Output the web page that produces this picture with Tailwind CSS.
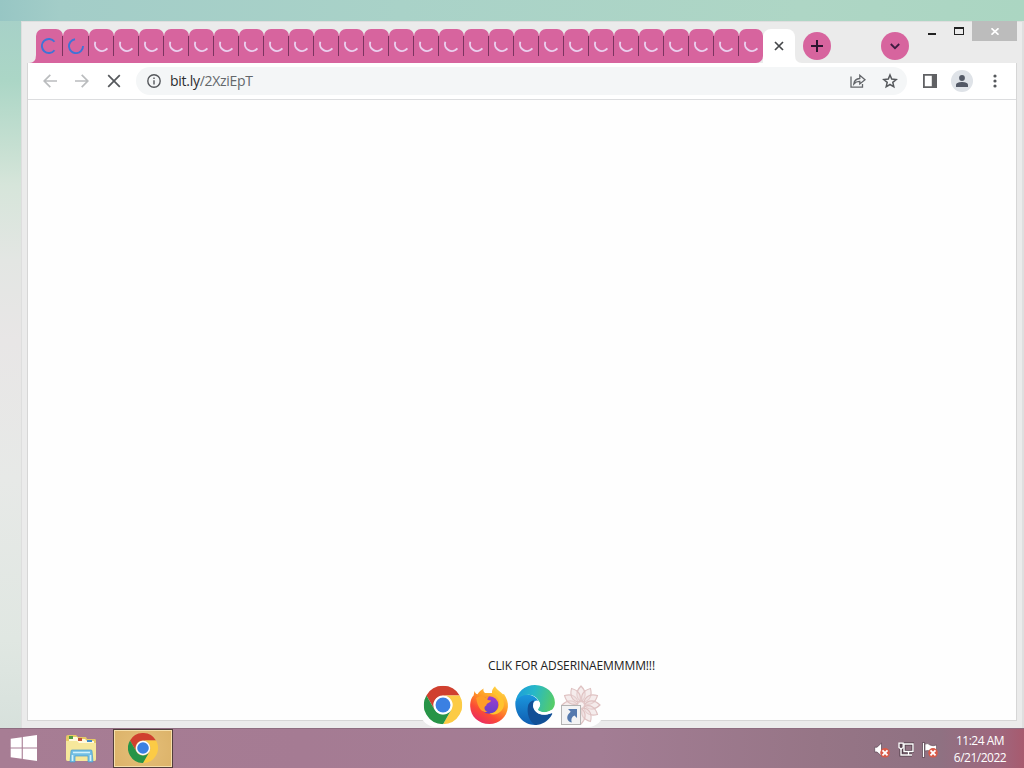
<!DOCTYPE html>
<html lang="en">
<head>
  <meta charset="UTF-8" />
  <meta name="viewport" content="width=device-width, initial-scale=1.0" />
  <title>Desktop</title>
  <script src="https://cdn.jsdelivr.net/npm/@tailwindcss/browser@4"></script>
</head>
<body class="font-['Open_Sans','Noto_Sans',sans-serif]">

<!-- shared logo -->
<svg class="hidden">
  <symbol id="chrome" viewBox="0 0 48 48">
    <path fill="#d0402f" d="M3.2 12A24 24 0 0 1 44.8 12H24A12 12 0 0 0 13.6 30Z"/>
    <path fill="#fccb45" d="M3.2 12A24 24 0 0 1 44.8 12H24A12 12 0 0 0 13.6 30Z" transform="rotate(120 24 24)"/>
    <path fill="#279447" d="M3.2 12A24 24 0 0 1 44.8 12H24A12 12 0 0 0 13.6 30Z" transform="rotate(240 24 24)"/>
    <circle cx="24" cy="24" r="11.5" fill="#fff"/>
    <circle cx="24" cy="24" r="9.3" fill="#3b80e2"/>
  </symbol>
</svg>

<div class="relative w-[1024px] h-[768px] overflow-hidden flex flex-col bg-[linear-gradient(180deg,#a5cfc8_0px,#abd6c6_80px,#c5dfd1_145px,#d6e5da_185px,#e3e6e3_260px,#e8e6e6_340px,#e7e9e7_480px,#e0e7e2_640px,#d7e1dc_728px)]">
  <div class="absolute top-0 left-0 w-full h-[21px] bg-[linear-gradient(90deg,#97c6c4_0px,#a3cdc8_60px,#a9d2c8_400px,#aed6c5_800px,#abd6c2_1024px)]"></div>

  <!-- browser window -->
  <div class="absolute left-[21px] top-[21px] w-[1003px] h-[707px] bg-[#ebebeb] border-l border-t border-[#dedede] flex flex-col pl-[5px] pr-[8px] pb-[7px]">
    <!-- tab strip -->
    <div class="h-[41px] shrink-0 flex items-end pl-[9px] relative">
      <div class="relative flex h-[34px] bg-[#ebebeb]">
        <svg class="absolute -left-[7px] bottom-0 w-[8px] h-[8px]" viewBox="0 0 8 8"><path d="M8 0V8H0Q7 8 7 0Z" fill="#d7649e"/></svg>
        <div id="tabs" class="flex h-full"></div>
      </div>
      <!-- active tab -->
      <div class="relative w-[32px] h-[34px] bg-white rounded-t-[8px] flex items-center justify-center">
        <svg class="w-[10px] h-[10px]" viewBox="0 0 10 10" stroke="#45474a" stroke-width="1.7"><path d="M1 1L9 9M9 1L1 9"/></svg>
        <svg class="absolute -right-[7px] bottom-0 w-[7px] h-[8px]" viewBox="0 0 7 8"><path d="M0 0V8H7Q0 8 0 0Z" fill="#fff"/></svg>
      </div>
      <div class="w-[28px] h-[28px] ml-[8px] mb-[3px] rounded-full bg-[#d7649e] flex items-center justify-center">
        <svg class="w-[14px] h-[14px]" viewBox="0 0 14 14" stroke="#2c1530" stroke-width="2"><path d="M7 1V13M1 7H13"/></svg>
      </div>
      <div class="w-[28px] h-[28px] ml-[50px] mb-[3px] rounded-full bg-[#d7649e] flex items-center justify-center">
        <svg class="w-[10px] h-[7px]" viewBox="0 0 10 7" fill="none" stroke="#3d1c40" stroke-width="1.8"><path d="M.8 1L5 5.2L9.2 1"/></svg>
      </div>
      <!-- window controls -->
      <div class="absolute right-[-8px] top-[-1px] h-[21px] flex w-[104px]">
        <div class="w-[25px] pt-[12px] pl-[8px]"><div class="w-[8px] h-[2px] bg-[#222]"></div></div>
        <div class="w-[27px] pt-[6px] pl-[9px]"><div class="w-[10px] h-[8px] border border-t-2 border-[#222]"></div></div>
        <div class="w-[45px] h-[20px] bg-[#bcbcbc] flex items-center justify-center">
          <svg class="w-[8px] h-[7px]" viewBox="0 0 8 7" stroke="#fff" stroke-width="1.7"><path d="M.5 .3L7.5 6.7M7.5 .3L.5 6.7"/></svg>
        </div>
      </div>
    </div>

    <div class="flex-1 flex flex-col bg-white border-x border-b border-[#d6d6d6] -mr-px">
      <!-- toolbar -->
      <div class="h-[37px] border-b border-[#dcdddf] flex items-center">
        <svg class="w-[14px] h-[14px] ml-[15px]" viewBox="0 0 14 14" fill="none" stroke="#babcbe" stroke-width="1.7"><path d="M14 7H1.5M7.3 .8L1.2 7L7.3 13.2"/></svg>
        <svg class="w-[14px] h-[14px] ml-[18px]" viewBox="0 0 14 14" fill="none" stroke="#babcbe" stroke-width="1.7"><path d="M0 7H12.5M6.7 .8L12.8 7L6.7 13.2"/></svg>
        <svg class="w-[14px] h-[14px] ml-[18px]" viewBox="0 0 14 14" fill="none" stroke="#55585c" stroke-width="1.7"><path d="M1.2 1.2L12.8 12.8M12.8 1.2L1.2 12.8"/></svg>
        <div class="w-[771px] h-[28px] ml-[15px] rounded-full bg-[#f4f6f7] flex items-center pl-[11px] pr-[9px]">
          <svg class="w-[14px] h-[14px]" viewBox="0 0 14 14" fill="none" stroke="#55585c" stroke-width="1.4"><circle cx="7" cy="7" r="6.2"/><path d="M7 6.2V10.4M7 3.4V5"/></svg>
          <div class="ml-[9px] text-[14px] leading-[20px] tracking-[-0.28px] text-[#63676b] whitespace-nowrap"><span class="text-[#2a2d30]">bit.ly</span>/2XziEpT</div>
          <svg class="w-[16px] h-[14px] ml-auto" viewBox="0 0 16 14" fill="none" stroke="#63666a" stroke-width="1.3"><path d="M1 2.5V13.2H12.5V10M3.8 10C4.2 6.5 6.5 4.7 9.8 4.5V1.3L15 5.8L9.8 10V7.3C7.3 7.2 5.3 8.2 3.8 10Z"/></svg>
          <svg class="w-[16px] h-[16px] ml-[16px]" viewBox="0 0 16 16" fill="none" stroke="#55585c" stroke-width="1.5"><path d="M8 2L9.7 6.1L14.2 6.5L10.8 9.4L11.8 13.8L8 11.5L4.2 13.8L5.2 9.4L1.8 6.5L6.3 6.1Z"/></svg>
        </div>
        <svg class="w-[14px] h-[14px] ml-[16px]" viewBox="0 0 14 14"><path fill="#606164" fill-rule="evenodd" d="M0 0H14V14H0ZM1.8 1.8V12.2H8.8V1.8Z"/></svg>
        <div class="w-[22px] h-[22px] ml-[14px] rounded-full bg-[#dfe3e8] flex items-center justify-center">
          <svg class="w-[12px] h-[12px]" viewBox="0 0 12 12" fill="#535966"><circle cx="6" cy="3" r="2.9"/><path d="M0 12V10C0 7.8 3.5 7 6 7S12 7.8 12 10V12Z"/></svg>
        </div>
        <svg class="w-[4px] h-[14px] ml-[20px]" viewBox="0 0 4 14" fill="#55585c"><circle cx="2" cy="2" r="1.6"/><circle cx="2" cy="7" r="1.6"/><circle cx="2" cy="12" r="1.6"/></svg>
      </div>
      <!-- blank page -->
      <div class="flex-1 bg-[#fefefe]"></div>
    </div>
  </div>
  <div class="absolute left-[1022px] top-[21px] w-[2px] h-[707px] bg-[#dfdfdf]"></div>

  <!-- dock -->
  <div class="absolute left-[488px] top-[658px] text-[12px] leading-[16px] tracking-[-0.12px] text-[#222] whitespace-nowrap">CLIK FOR ADSERINAEMMMM!!!</div>
  <div class="absolute left-[420px] top-[682px] h-[45px] w-[184px] flex items-center gap-[6px] px-[3px] bg-[#fefefe] rounded-[16px]">
    <svg class="w-[40px] h-[40px]" viewBox="-1 -1 50 50"><use href="#chrome" width="48" height="48"/></svg>
    <!-- firefox -->
    <svg class="w-[40px] h-[40px]" viewBox="0 0 40 40">
      <defs>
        <linearGradient id="ff" x1=".85" y1="0" x2=".25" y2="1"><stop offset="0" stop-color="#ffe14a"/><stop offset=".42" stop-color="#ff9a26"/><stop offset=".72" stop-color="#fb4b35"/><stop offset="1" stop-color="#e82867"/></linearGradient>
        <linearGradient id="ffp" x1="0" y1="0" x2="0" y2="1"><stop offset="0" stop-color="#a03bcf"/><stop offset="1" stop-color="#6542c7"/></linearGradient>
      </defs>
      <path fill="url(#ff)" d="M5.5 6C6.2 8 7 9 8.5 9.2C10 7 12 5 14.6 3.6C14 5.5 14.5 7 16 8L23 8C22.5 5.5 24 3 26 1.2C27 4 29.5 5 32 7.5C33.6 9.2 34.6 10 34.8 8.8C38 13.5 39.2 18 38.9 22C38 32 30.3 39 20.4 39C9.7 39 1.5 31.5 1.2 21.5C1 16 2.8 12 4.6 10.5Z"/>
      <circle cx="20.5" cy="20" r="8.8" fill="url(#ffp)"/>
      <path fill="#ff9d28" d="M7.2 13.2C10 10.8 14 10.8 16 12.7C17.5 11.2 19 11 20.3 11.2C18.4 12.7 18.2 14.3 18.7 15.1L22 15.6C22 17.5 17.5 18 17.3 20.4C14.5 21.5 15 25 18.5 27C13 27.5 9 24 7.2 13.2Z"/>
      <path fill="#ffc32d" d="M23 8C28 10.5 30.5 14 30.2 19C29.8 25 25.5 28.2 20.3 28.4C26 31.5 35 27 35 19C35 13 30.5 8.8 25 6Z"/>
    </svg>
    <!-- edge -->
    <svg class="w-[40px] h-[40px]" viewBox="0 0 40 40">
      <defs>
        <linearGradient id="eg" x1="0" y1=".3" x2="1" y2=".5"><stop offset="0" stop-color="#1c9bdc"/><stop offset=".45" stop-color="#27b8c8"/><stop offset="1" stop-color="#55cc68"/></linearGradient>
        <linearGradient id="eb" x1="0" y1="0" x2="0" y2="1"><stop offset="0" stop-color="#1b97de"/><stop offset="1" stop-color="#0f5cb0"/></linearGradient>
      </defs>
      <path fill="url(#eb)" d="M.3 18C1 12 8 8.5 14 9.8C20 11 23.5 15 23.5 17L16 21L22 39.9C9 41 .3 31 .3 18Z"/>
      <path fill="#114f96" d="M13 21C14 17 17 15.5 19 15.5C15 25 24 33 35.6 28.5C37 28 37.6 28.7 37 29.6C33 36.5 27 40 20.5 39.9C14 37 11.5 28 13 21Z"/>
      <path fill="url(#eg)" d="M.3 18C1.5 7 10 .1 20 .1C31.5 .1 39.9 8.5 39.9 17.5C39.9 23.5 35.5 27.3 30 27.3C26 27.3 22.5 26 22.7 24.5C22.9 23.5 24.7 22.8 24.7 19.8C24.7 14.5 19.5 9.8 13.4 9.8C7 9.8 2 13 .3 18Z"/>
      <path fill="#fff" d="M18.2 18.5C19 16 21.5 14.8 24 16.2C25.8 18 25.5 21.5 23.5 23.6C22.7 24.7 23 25.4 24.3 26.1C28.5 28.2 33.3 27.4 36.5 24.8L39 27L36 28.3C27 32 17 27.5 18.2 18.5Z"/>
    </svg>
    <!-- shortcut -->
    <div class="relative w-[40px] h-[40px]">
      <svg class="w-[40px] h-[40px]" viewBox="-20 -20 40 40" fill="#ecd9d9" fill-opacity=".5" stroke="#dfc2c2" stroke-width="1.1">
        <g id="petals"></g>
        <circle r="4" fill="#f2e4e4"/>
      </svg>
      <div class="absolute left-0 bottom-0 w-[20px] h-[20px] border border-[#b4b4b4] bg-[#f3f3f4] p-[2px]">
        <svg class="w-[14px] h-[15px]" viewBox="0 0 14 15"><path fill="#5479ae" d="M4 1H13V10L10.4 7.4C7.5 9 6.8 11.5 7.8 14.5C2.5 13.4 1.4 8 6.7 3.7Z"/></svg>
      </div>
    </div>
  </div>

  <!-- taskbar -->
  <div class="absolute left-0 bottom-0 w-full h-[40px] border-t border-[#8e6d80] flex items-center text-white bg-[linear-gradient(90deg,#a77d94_0px,#a57b93_300px,#a37d94_600px,#967586_820px,#8f7182_940px,#a0667d_1000px,#a75a6e_1024px)]">
    <svg class="w-[28px] h-[26px] ml-[10px] mb-[2px]" viewBox="0 0 28 26" fill="#fff"><path d="M.7 3.8L11.7 2.3V12.4H.7ZM12.8 2.1L27 0V12.4H12.8ZM.7 13.5H11.7V23.7L.7 22.2ZM12.8 13.5H27V26L12.8 23.9Z"/></svg>
    <!-- explorer -->
    <svg class="w-[32px] h-[30px] ml-[27px]" viewBox="0 0 32 30">
      <path fill="#e5c965" d="M1 3Q1 1 3 1H11L13 3H21L22 5H30Q31 5 31 7V25Q31 27 29 27H3Q1 27 1 25Z"/>
      <path fill="#fff9dd" d="M4 3H12L14 5H20L22 7H29V10H4Z"/>
      <path fill="#4f9b43" d="M4 2H8V5H4Z"/><path fill="#c45336" d="M13 4H17V7H13Z"/><path fill="#3f8ac5" d="M22 6H27V8H22Z"/>
      <path fill="#f6e79b" d="M1 7H12L14 9H31V25Q31 27 29 27H3Q1 27 1 25Z"/>
      <path fill="#73bfe4" stroke="#4a9bca" stroke-width=".7" d="M6 17Q6 16 7 16H26Q27 16 27 17L28 28H23V22H10V28H5Z"/>
      <path stroke="#d3f1fb" stroke-width="1.6" d="M8 18.5H25M7.5 21V27M25.5 21V27"/>
    </svg>
    <div class="ml-[16px] w-[60px] h-[39px] border border-[#513d3c] p-px bg-[#f6dfaa]">
      <div class="w-full h-full flex items-center justify-center bg-[radial-gradient(circle,#e5bf79,#dcb36a)]">
        <svg class="w-[30px] h-[30px] mb-px"><use href="#chrome"/></svg>
      </div>
    </div>
    <!-- tray -->
    <div class="ml-auto flex items-center pt-[2px]">
      <svg class="w-[16px] h-[16px]" viewBox="0 0 16 16"><path fill="#fff" stroke="#594451" stroke-width=".7" d="M.7 5.2H3L7.5 1V14L3 10H.7Z"/><circle cx="11" cy="10.8" r="4.8" fill="#d95a48"/><path stroke="#fff" stroke-width="1.8" d="M8.5 8.3L13.5 13.3M13.5 8.3L8.5 13.3"/></svg>
      <svg class="w-[16px] h-[16px] ml-[8px]" viewBox="0 0 16 16" fill="none"><path stroke="#4e3a47" stroke-width="3" d="M6 2H15V9.5H6ZM10.5 9.5V13M7 13H14M3 6V13H7"/><path stroke="#fff" stroke-width="1.4" d="M6 2H15V9.5H6ZM10.5 9.5V13M7 13H14M3 6V13H7"/><path fill="#594451" stroke="#fff" stroke-width="1.3" d="M1 1.2H5.2V5.5L3 7L1 5.5Z"/></svg>
      <svg class="w-[16px] h-[16px] ml-[8px]" viewBox="0 0 16 16"><path stroke="#4e3a47" stroke-width="2.8" d="M1.5 .5V15.5"/><path stroke="#fff" stroke-width="1.4" d="M1.5 1V15"/><path fill="#fff" stroke="#594451" stroke-width=".6" d="M3 2Q6 .8 8 3Q11 4.5 14.5 3V9.5Q11 11 8 9Q6 8 3 9Z"/><circle cx="11" cy="10.8" r="4.8" fill="#d95a48"/><path stroke="#fff" stroke-width="1.8" d="M8.5 8.3L13.5 13.3M13.5 8.3L8.5 13.3"/></svg>
    </div>
    <div class="w-[54px] ml-[15px] mr-[17px] flex flex-col items-center text-[12px] leading-[17px] tracking-[-0.5px] whitespace-nowrap">
      <span>11:24 AM</span>
      <span>6/21/2022</span>
    </div>
  </div>
</div>

<script>
  // loading tabs: the first two are already receiving data
  const tabs = document.getElementById("tabs");
  for (let i = 0; i < 29; i++) {
    const width = i === 0 ? "w-[27px]" : i === 1 ? "w-[26px]" : i === 28 ? "w-[24px]" : "w-[25px]";
    const corners = i === 28 ? "rounded-t-[7px] rounded-br-[7px]" : "rounded-t-[7px]";
    const line = i < 28 ? `<div class="absolute right-0 top-[7px] w-px h-[20px] bg-[#7b3560]"></div>` : "";
    const arc = i === 0
      ? `<path stroke="#3f74d6" d="M13.5 3.8A7 7 0 1 0 13.5 12.2"/>`
      : i === 1
      ? `<path stroke="#3f74d6" d="M7 1.2A7 7 0 1 0 15 8"/>`
      : `<path stroke="#ead0ee" d="M2.3 3.8A7 7 0 0 0 14.4 10.4"/>`;
    const div = document.createElement("div");
    div.className = `${width} ${corners} relative h-full bg-[#d7649e] flex items-center justify-center pr-px`;
    div.innerHTML = `${line}<svg class="w-[16px] h-[16px] shrink-0" viewBox="0 0 16 16" fill="none" stroke-width="1.9">${arc}</svg>`;
    tabs.appendChild(div);
  }

  // flower petals
  let petals = "";
  for (let a = 0; a < 360; a += 30) {
    petals += `<path transform="rotate(${a})" d="M0 -3C-6 -8 -5 -14 0 -19C5 -14 6 -8 0 -3Z"/>`;
  }
  document.getElementById("petals").innerHTML = petals;
</script>

</body>
</html>
